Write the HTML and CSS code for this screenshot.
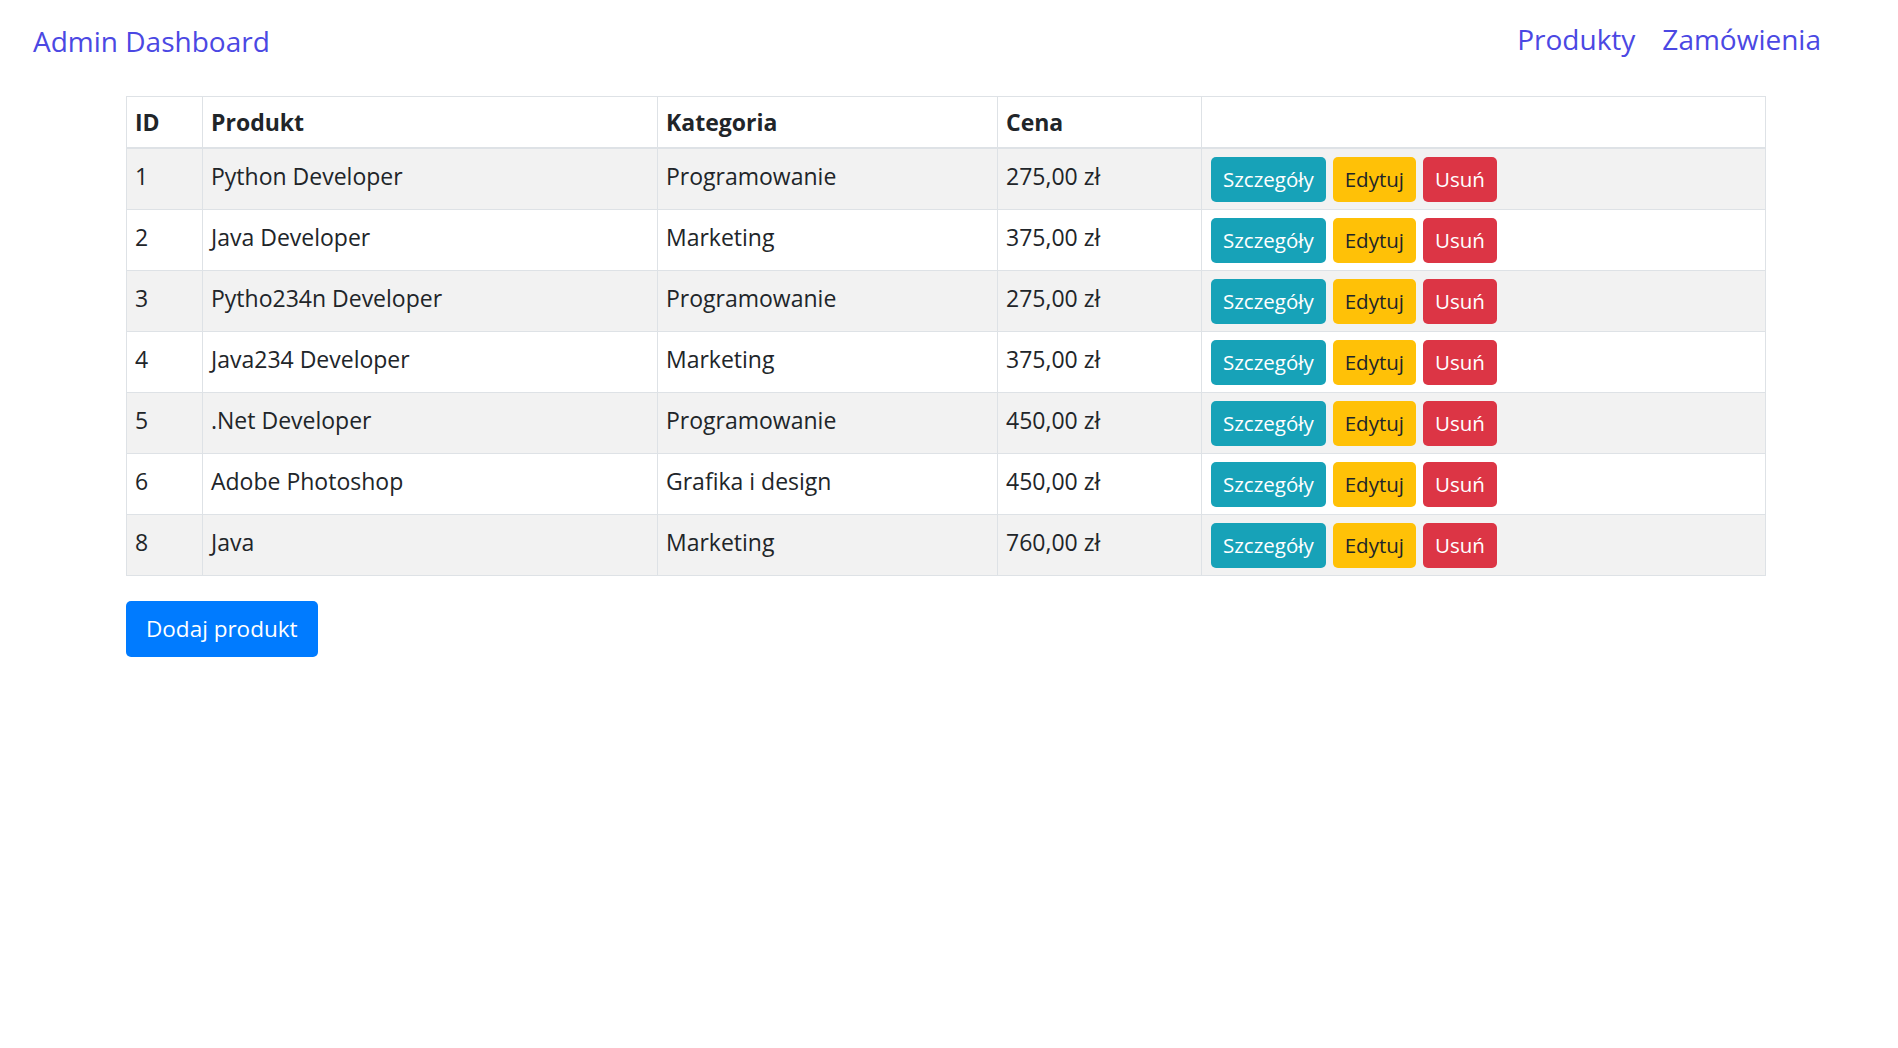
FILE: index.html
```html
<!DOCTYPE html>
<html lang="pl">
<head>
<meta charset="utf-8">
<title>Admin Dashboard</title>
<link rel="stylesheet" href="styles.css">
</head>
<body>
<header class="topbar">
  <a class="brand" href="#">Admin Dashboard</a>
  <nav class="nav">
    <a class="nav-link" href="#">Produkty</a>
    <a class="nav-link" href="#">Zamówienia</a>
  </nav>
</header>
<main class="content">
  <table class="table">
    <colgroup>
      <col class="c-id"><col class="c-prod"><col class="c-cat"><col class="c-price"><col class="c-act">
    </colgroup>
    <thead>
      <tr><th>ID</th><th>Produkt</th><th>Kategoria</th><th>Cena</th><th></th></tr>
    </thead>
    <tbody>
      <tr><td>1</td><td>Python Developer</td><td>Programowanie</td><td>275,00 zł</td>
        <td class="act"><div class="actions"><a class="btn btn-info" href="#">Szczegóły</a><a class="btn btn-warning" href="#">Edytuj</a><a class="btn btn-danger" href="#">Usuń</a></div></td></tr>
      <tr><td>2</td><td>Java Developer</td><td>Marketing</td><td>375,00 zł</td>
        <td class="act"><div class="actions"><a class="btn btn-info" href="#">Szczegóły</a><a class="btn btn-warning" href="#">Edytuj</a><a class="btn btn-danger" href="#">Usuń</a></div></td></tr>
      <tr><td>3</td><td>Pytho234n Developer</td><td>Programowanie</td><td>275,00 zł</td>
        <td class="act"><div class="actions"><a class="btn btn-info" href="#">Szczegóły</a><a class="btn btn-warning" href="#">Edytuj</a><a class="btn btn-danger" href="#">Usuń</a></div></td></tr>
      <tr><td>4</td><td>Java234 Developer</td><td>Marketing</td><td>375,00 zł</td>
        <td class="act"><div class="actions"><a class="btn btn-info" href="#">Szczegóły</a><a class="btn btn-warning" href="#">Edytuj</a><a class="btn btn-danger" href="#">Usuń</a></div></td></tr>
      <tr><td>5</td><td>.Net Developer</td><td>Programowanie</td><td>450,00 zł</td>
        <td class="act"><div class="actions"><a class="btn btn-info" href="#">Szczegóły</a><a class="btn btn-warning" href="#">Edytuj</a><a class="btn btn-danger" href="#">Usuń</a></div></td></tr>
      <tr><td>6</td><td>Adobe Photoshop</td><td>Grafika i design</td><td>450,00 zł</td>
        <td class="act"><div class="actions"><a class="btn btn-info" href="#">Szczegóły</a><a class="btn btn-warning" href="#">Edytuj</a><a class="btn btn-danger" href="#">Usuń</a></div></td></tr>
      <tr><td>8</td><td>Java</td><td>Marketing</td><td>760,00 zł</td>
        <td class="act"><div class="actions"><a class="btn btn-info" href="#">Szczegóły</a><a class="btn btn-warning" href="#">Edytuj</a><a class="btn btn-danger" href="#">Usuń</a></div></td></tr>
    </tbody>
  </table>
  <a class="btn btn-primary btn-add" href="#">Dodaj produkt</a>
</main>
</body>
</html>
```
FILE: styles.css
```css
* { box-sizing: border-box; }
html, body { margin: 0; padding: 0; background: #fff; }
body {
  font-family: "Open Sans", "Noto Sans", sans-serif;
  color: #212529;
  font-size: 23px;
  line-height: 1.5;
}
a { text-decoration: none; }

.topbar {
  display: flex;
  justify-content: space-between;
  align-items: flex-start;
  height: 96px;
  padding: 0 77px 0 33px;
}
.brand {
  margin-top: 20px;
  font-size: 28px;
  line-height: 42px;
  color: #4b48e3;
}
.nav {
  display: flex;
  gap: 27px;
  margin-top: 18px;
}
.nav-link {
  font-size: 28px;
  line-height: 42px;
  color: #4b48e3;
}

.content {
  padding: 0 132px 0 126px;
}
.table {
  width: 100%;
  table-layout: fixed;
  border-collapse: collapse;
  margin-bottom: 25px;
}
.c-id { width: 76px; }
.c-prod { width: 455px; }
.c-cat { width: 340px; }
.c-price { width: 204px; }
.c-act { width: auto; }

.table th, .table td {
  border: 1px solid #dee2e6;
  text-align: left;
  vertical-align: middle;
  line-height: 33px;
}
.table th {
  font-weight: 700;
  border-bottom-width: 2px;
  padding: 9px 8px 8px;
}
.table td { padding: 5px 8px 10px; }
.table td.act { padding: 8px 8px 7px; }
.table tbody tr:nth-child(odd) { background: #f2f2f2; }

.actions {
  display: flex;
  gap: 7px;
  padding-left: 1px;
}
.btn {
  display: inline-block;
  height: 45px;
  padding: 0 12px;
  line-height: 45px;
  font-size: 20.5px;
  border-radius: 5px;
  color: #fff;
  white-space: nowrap;
}
.btn-info { background: #17a2b8; color: #fff; }
.btn-warning { background: #ffc107; color: #212529; }
.btn-danger { background: #dc3545; color: #fff; }
.btn-primary { background: #007bff; color: #fff; }
.btn-add {
  height: 56px;
  line-height: 56px;
  padding: 0 20px;
  font-size: 22.5px;
}
```
